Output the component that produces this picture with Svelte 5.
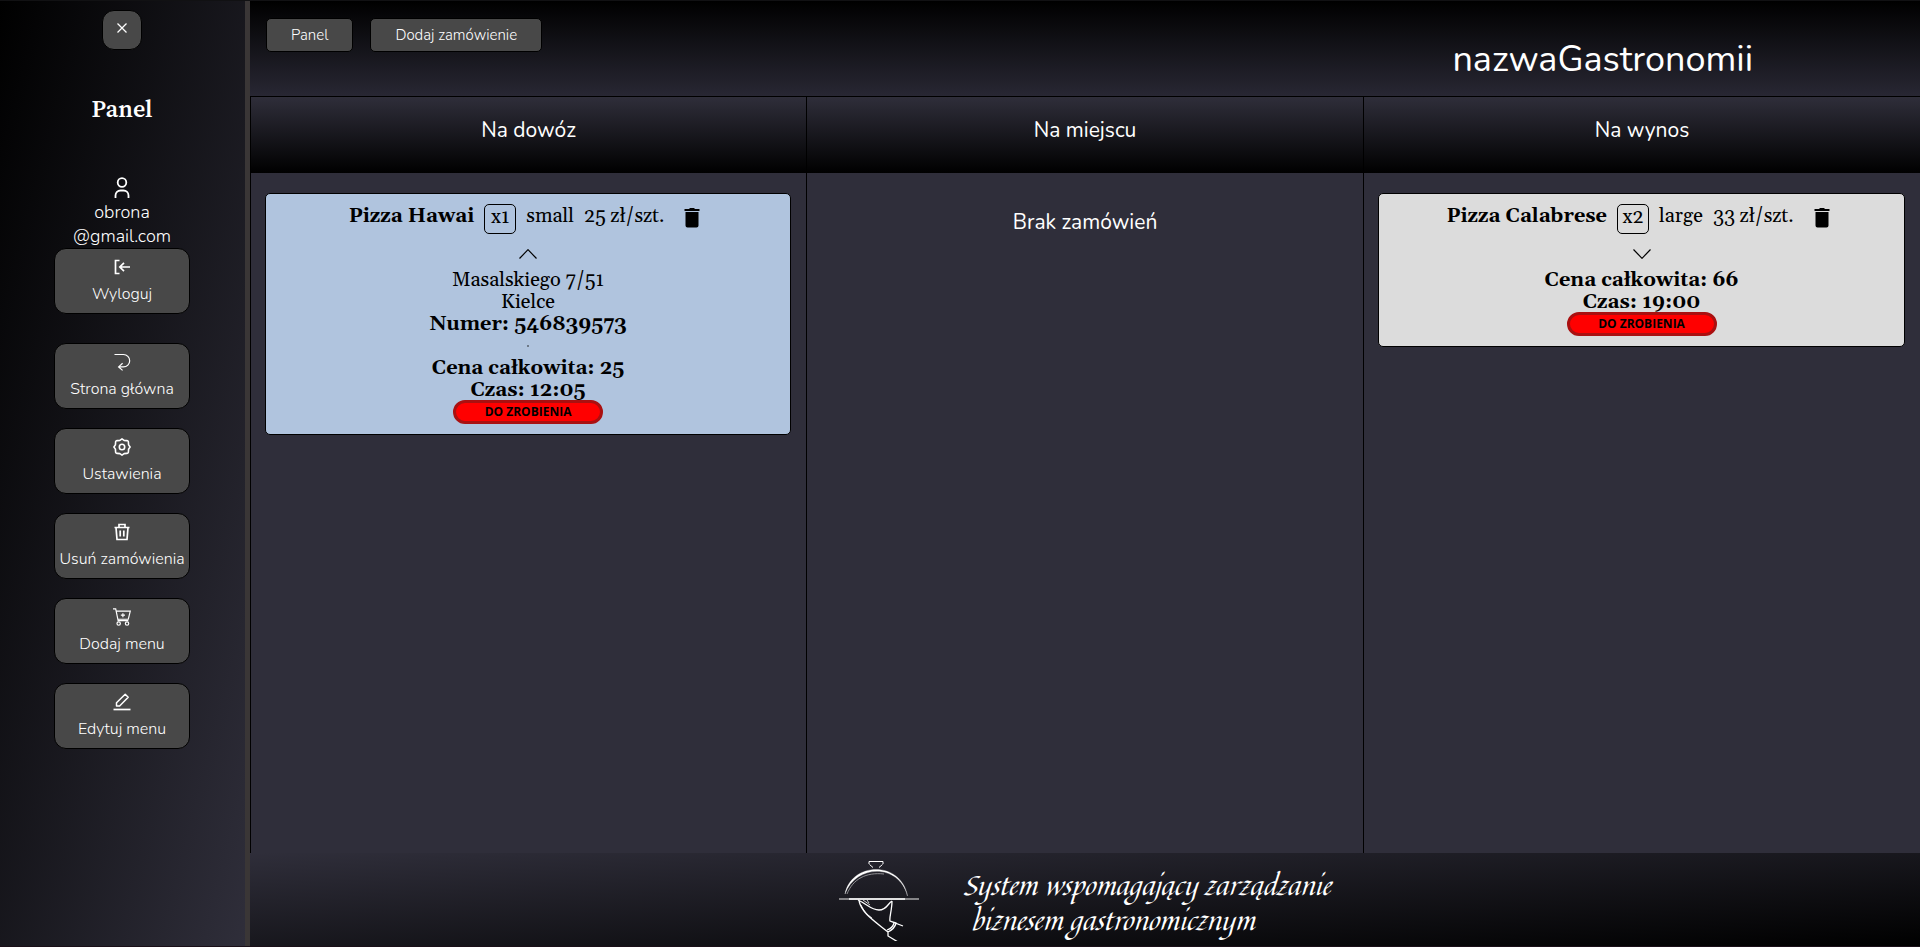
<script>
  const actions = [
    { label: 'Strona główna', icon: 'back' },
    { label: 'Ustawienia', icon: 'gear' },
    { label: 'Usuń zamówienia', icon: 'trash' },
    { label: 'Dodaj menu', icon: 'cart' },
    { label: 'Edytuj menu', icon: 'edit' },
  ];

  let columns = $state([
    {
      title: 'Na dowóz',
      orders: [
        {
          name: 'Pizza Hawai', count: 1, size: 'small', price: 25, total: 25, time: '12:05',
          open: true, tone: 'blue',
          address: { street: 'Masalskiego 7/51', city: 'Kielce', phone: '546839573' },
        },
      ],
    },
    { title: 'Na miejscu', orders: [] },
    {
      title: 'Na wynos',
      orders: [
        { name: 'Pizza Calabrese', count: 2, size: 'large', price: 33, total: 66, time: '19:00', open: false, tone: 'gray' },
      ],
    },
  ]);
</script>

{#snippet icon(name)}
  {#if name === 'logout'}
    <svg class="icon" viewBox="0 0 18 18"><path d="M6.500 2.500H2.500V15.500H6.500M17 9H7M11 4.800L6.800 9L11 13.200" stroke-width="1.700" /></svg>
  {:else if name === 'back'}
    <svg class="icon" viewBox="0 0 18 18"><path d="M1.500 1.500H10.500A6.200 6.200 0 0 1 10.500 13.900H6M9.600 10.200L5.600 13.900L9.600 17.400" stroke-width="1.200" /></svg>
  {:else if name === 'gear'}
    <svg class="icon" viewBox="0 0 18 18">
      <path d="M9 .900L11.100 2.400L13.700 2.600A1.500 1.500 0 0 1 15.400 4.300L15.600 6.900L17.100 9L15.600 11.100L15.400 13.700A1.500 1.500 0 0 1 13.700 15.400L11.100 15.600L9 17.100L6.900 15.600L4.300 15.400A1.500 1.500 0 0 1 2.600 13.700L2.400 11.100L.900 9L2.400 6.900L2.600 4.300A1.500 1.500 0 0 1 4.300 2.600L6.900 2.400Z" stroke-width="1.600" stroke-linejoin="round" />
      <circle cx="9" cy="9" r="2.700" stroke-width="1.600" />
    </svg>
  {:else if name === 'trash'}
    <svg class="icon" viewBox="0 0 18 18"><path d="M1.500 4.500H16.500M6 4.500V1.500H12V4.500M3 4.500L4 16.500H14L15 4.500M7.200 7.500V13.500M10.800 7.500V13.500" stroke-width="1.700" /></svg>
  {:else if name === 'cart'}
    <svg class="icon cart" viewBox="0 0 20 20"><path d="M0 1H3L5.700 14H17M3.500 3.500H19.200L17 12.500H5.300M11 5.700V10.300M8.700 8H13.300" stroke-width="1.300" /><circle cx="6.300" cy="17.300" r="1.900" stroke-width="1.300" /><circle cx="15.600" cy="17.300" r="1.900" stroke-width="1.300" /></svg>
  {:else if name === 'edit'}
    <svg class="icon" viewBox="0 0 18 18"><path d="M3.500 13V9.800L12.200 1.300L15.200 4.300L6.600 13Z" stroke-width="1.500" stroke-linejoin="round" /><path d="M.500 16.500H17.500" stroke-width="1.700" /></svg>
  {/if}
{/snippet}

<div class="page">
  <aside>
    <button class="close" aria-label="Zamknij">
      <svg viewBox="0 0 12 12"><path d="M1.500 1.500L10.500 10.500M10.500 1.500L1.500 10.500" stroke-width="1.300" /></svg>
    </button>
    <h2>Panel</h2>
    <div class="user">
      <svg viewBox="0 0 16 22"><circle cx="8" cy="5.500" r="4.300" stroke-width="1.800" /><path d="M1.500 21V18.500A5 5 0 0 1 6.500 13.500H9.500A5 5 0 0 1 14.500 18.500V21" stroke-width="1.800" /></svg>
      <span>obrona</span>
      <span>@gmail.com</span>
    </div>
    <button class="side">{@render icon('logout')}Wyloguj</button>
    <nav>
      {#each actions as a}
        <button class="side">{@render icon(a.icon)}{a.label}</button>
      {/each}
    </nav>
  </aside>

  <main>
    <header>
      <button>Panel</button>
      <button>Dodaj zamówienie</button>
      <h1>nazwaGastronomii</h1>
    </header>

    <div class="board">
      {#each columns as column}
        <section>
          <h3>{column.title}</h3>
          {#each column.orders as order}
            <article class={order.tone}>
              <div class="item">
                <b>{order.name}</b>
                <span class="count">x{order.count}</span>
                <span>{order.size}</span>
                <span>{order.price} zł/szt.</span>
                <button class="remove" aria-label="Usuń">
                  <svg viewBox="0 0 16 20"><path d="M.500 1H5L6 0H10L11 1H15.500V3H.500ZM1.500 4H14.500V17.500A2 2 0 0 1 12.500 19.500H3.500A2 2 0 0 1 1.500 17.500Z" /></svg>
                </button>
              </div>
              <button class="toggle" aria-label="Szczegóły" onclick={() => (order.open = !order.open)}>
                <svg viewBox="0 0 18 10"><path d={order.open ? 'M.500 9.500L9 .700L17.500 9.500' : 'M.500 .500L9 9.300L17.500 .500'} stroke-width="1.200" /></svg>
              </button>
              {#if order.open && order.address}
                <p>{order.address.street}</p>
                <p>{order.address.city}</p>
                <p><b>Numer: {order.address.phone}</b></p>
                <hr />
              {/if}
              <p><b>Cena całkowita: {order.total}</b></p>
              <p><b>Czas: {order.time}</b></p>
              <button class="status">DO ZROBIENIA</button>
            </article>
          {:else}
            <p class="empty">Brak zamówień</p>
          {/each}
        </section>
      {/each}
    </div>

    <footer>
      <svg class="logo" viewBox="0 0 80 80">
        <path d="M30 3V.500H44V3M30.500 3.500L34 6.500M43.500 3.500L40 6.500" stroke-width="1" />
        <path d="M6 33C12 1 62 -1 68.500 35C60 2 17 3 6 33Z" fill="#fff" stroke-width=".300" />
        <path d="M8 33C14 18 27 11 45 13" stroke="#a9a9ac" stroke-width=".800" />
        <path d="M0 38H80" stroke="#858487" stroke-width="2" />
        <path d="M10 38H66" stroke-width="1.600" />
        <path d="M19 39C28 43 32 49 40 49C48 49 49 42 53 40M20 40C23 52 34 59 49 71M53 40C53 49 50 57 51 60L64 65M51 60L57 62C56 67 53 69 49 71V75L59 81M55 62C54 66 51 68 48 69" stroke-width="1.300" />
        <path d="M24 39L31 44M28 39L30 42M22 44C24 49 28 54 33 57" stroke-width=".800" />
      </svg>
      <p>System wspomagający zarządzanie<br /><span>biznesem gastronomicznym</span></p>
    </footer>
  </main>
</div>

<style>
  :global(body) { background: #2f2e3a; }
  * { box-sizing: border-box; }
  h1, h2, h3, p { margin: 0; font-weight: 400; }
  svg { display: block; fill: none; stroke: #fff; }
  button { font: inherit; color: inherit; cursor: pointer; }

  .page {
    display: flex;
    min-height: 100vh;
    border-top: 1px solid #111113;
    border-bottom: 1px solid #1a0f18;
    color: #fff;
    font-family: Nunito, Lato, sans-serif;
  }

  aside {
    flex: 0 0 250px;
    display: flex;
    flex-direction: column;
    align-items: center;
    padding: 9px 1px 0 0;
    border-right: 5px solid #3a3636;
    background: linear-gradient(to bottom right, #000, #2f2e3a);
    font-size: 16px;
    font-weight: 300;
  }
  .close {
    width: 40px;
    height: 40px;
    padding: 0 0 5px;
    border: 1px solid #000;
    border-radius: 12px;
    background: #484848;
  }
  .close svg { width: 12px; height: 12px; margin: 0 auto; }
  h2 {
    margin: 42px 0 51px;
    font: 600 24px/34px 'Source Serif Pro', 'Source Serif 4', Georgia, 'Liberation Serif', serif;
  }
  .user {
    display: flex;
    flex-direction: column;
    align-items: center;
    font-size: 18px;
    line-height: 24px;
  }
  .user svg { width: 16px; height: 22px; margin-bottom: 1px; }
  .side {
    display: flex;
    flex-direction: column;
    align-items: center;
    gap: 6px;
    width: 136px;
    height: 66px;
    padding: 9px 0 0;
    border: 1px solid #000;
    border-radius: 12px;
    background: #484848;
    white-space: nowrap;
    line-height: 24px;
  }
  .icon { width: 18px; height: 18px; }
  .icon.cart { width: 20px; }
  nav {
    display: flex;
    flex-direction: column;
    gap: 19px;
    margin-top: 29px;
  }

  main {
    flex: 1;
    display: flex;
    flex-direction: column;
    min-width: 0;
  }
  header {
    display: flex;
    align-items: flex-start;
    gap: 17px;
    height: 96px;
    padding: 17px 167px 0 16px;
    border-bottom: 1px solid #000;
    background: linear-gradient(#000, #282733);
  }
  header button {
    height: 34px;
    padding: 0 24px;
    border: 1px solid #000;
    border-radius: 5px;
    background: #484848;
    font-size: 15px;
    font-weight: 300;
  }
  h1 {
    margin: 20px 0 0 auto;
    font-size: 36px;
    line-height: 44px;
  }

  .board {
    flex: 1;
    display: grid;
    grid-template-columns: 33.3% 33.35% 1fr;
    background: #2f2e3a;
  }
  section { border-left: 1px solid #000; }
  h3 {
    height: 76px;
    padding-top: 19px;
    background: linear-gradient(#2f2e3a, #000);
    font-size: 21px;
    line-height: 28px;
    text-align: center;
  }
  .empty {
    margin-top: 35px;
    font-size: 21px;
    line-height: 28px;
    text-align: center;
  }

  article {
    margin: 20px 15px 20px 14px;
    padding: 10px 0;
    border: 1px solid #000;
    border-radius: 5px;
    color: #000;
    font: 20px/22px Georgia, Gelasio, 'Liberation Serif', serif;
    text-align: center;
  }
  .blue { background: #b0c4de; }
  .gray { background: #dcdcdc; }
  .item {
    display: flex;
    justify-content: center;
    align-items: flex-start;
    gap: 10px;
    padding-right: 7px;
    line-height: 24px;
  }
  .count {
    width: 32px;
    height: 30px;
    border: 1px solid #000;
    border-radius: 5px;
  }
  .remove, .toggle {
    padding: 0;
    border: 0;
    background: none;
  }
  .remove { margin: 4px 0 0 10px; }
  .remove svg { width: 16px; height: 20px; fill: #000; stroke: none; }
  .toggle { display: block; margin: 15px auto 10px; }
  .toggle svg { width: 18px; height: 10px; stroke: #000; }
  hr {
    width: 2px;
    height: 2px;
    margin: 10px auto;
    border: 0;
    background: #6d7988;
  }
  .status {
    display: block;
    width: 150px;
    height: 24px;
    margin: -1px auto 0;
    padding: 0;
    border: 3px solid #aa1010;
    border-radius: 12px;
    background: #f00;
    font: 700 12px/18px 'Open Sans', sans-serif;
  }

  footer {
    display: flex;
    justify-content: center;
    gap: 44px;
    padding: 8px 0 5px;
    background: linear-gradient(to bottom right, #2f2e3a, #000);
    font: italic 27px/35px 'Monotype Corsiva', 'Apple Chancery', Quintessential, Charm, Felipa, 'Liberation Serif', serif;
  }
  .logo { width: 80px; height: 80px; }
  footer p { padding-top: 7px; }
  footer span { padding-left: 8px; }
</style>
